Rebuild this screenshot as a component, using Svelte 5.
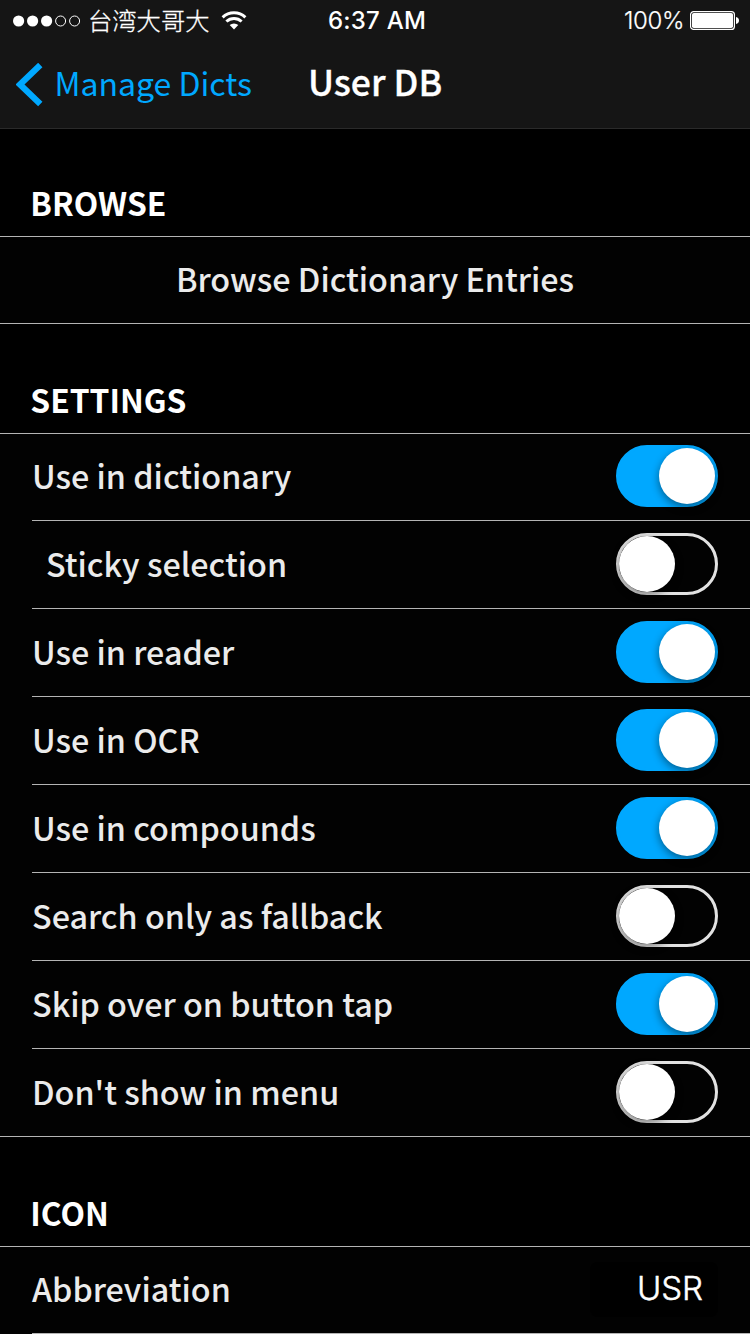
<script>
  const settings = [
    { label: 'Use in dictionary', on: true },
    { label: 'Sticky selection', on: false, nested: true },
    { label: 'Use in reader', on: true },
    { label: 'Use in OCR', on: true },
    { label: 'Use in compounds', on: true },
    { label: 'Search only as fallback', on: false },
    { label: 'Skip over on button tap', on: true },
    { label: "Don't show in menu", on: false }
  ];
</script>

<main class="screen">
  <header>
    <div class="status">
      <div class="carrier">
        <svg class="signal" width="68" height="12" viewBox="0 0 68 12">
          <circle cx="5.6" cy="6" r="5.6" fill="#fff" />
          <circle cx="19.6" cy="6" r="5.6" fill="#fff" />
          <circle cx="33.6" cy="6" r="5.6" fill="#fff" />
          <circle cx="47.6" cy="6" r="5" fill="none" stroke="#fff" />
          <circle cx="61.6" cy="6" r="5" fill="none" stroke="#fff" />
        </svg>
        <span class="operator">台湾大哥大</span>
        <svg class="wifi" width="26" height="19" viewBox="0 0 26 19">
          <g fill="none" stroke="#fff" stroke-width="3">
            <path d="M1.6 6.3A16.6 16.6 0 0 1 24.4 6.3" />
            <path d="M5.4 10.5A11 11 0 0 1 20.6 10.5" />
          </g>
          <path d="M8.7 14A6.6 6.6 0 0 1 17.3 14L13 18.5Z" fill="#fff" />
        </svg>
      </div>
      <span class="time">6:37 AM</span>
      <div class="power">
        <span class="percent">100%</span>
        <svg width="50" height="20" viewBox="0 0 50 20">
          <rect x=".6" y=".6" width="43.8" height="17.8" rx="3" fill="none" stroke="#fff" stroke-width="1.2" />
          <rect x="2" y="2" width="41" height="15" rx="1.8" fill="#fff" />
          <path d="M46 6Q49 6.6 49 9.5T46 13Z" fill="#fff" />
        </svg>
      </div>
    </div>
    <nav>
      <a class="back" href="#manage">
        <svg width="28" height="44" viewBox="0 0 28 44">
          <path d="M24.3 2L4 21.5L24.3 41" fill="none" stroke="#00a8ff" stroke-width="6.2" />
        </svg>
        <span>Manage Dicts</span>
      </a>
      <h1>User DB</h1>
    </nav>
  </header>

  <h2 class="first">BROWSE</h2>
  <section>
    <div class="row action"><span class="label">Browse Dictionary Entries</span></div>
  </section>

  <h2>SETTINGS</h2>
  <section>
    {#each settings as item}
      <div class="row">
        <span class="label" class:nested={item.nested}>{item.label}</span>
        <span class="switch" class:on={item.on}><i></i></span>
      </div>
    {/each}
  </section>

  <h2>ICON</h2>
  <section class="more">
    <div class="row">
      <span class="label">Abbreviation</span>
      <span class="field">USR</span>
    </div>
  </section>
</main>

<style>
  :global(body) {
    margin: 0;
    background: #000;
    overflow: hidden;
  }
  .screen {
    width: 750px;
    height: 1334px;
    overflow: hidden;
    background: #000;
    color: #fff;
    font-family: 'Noto Sans CJK SC', sans-serif;
  }
  header {
    box-sizing: border-box;
    height: 129px;
    background: #151515;
    border-bottom: 1px solid #2a2a2a;
  }
  .status {
    display: grid;
    grid-template-columns: 1fr auto 1fr;
    align-items: center;
    height: 41px;
    padding: 0 10px 0 13px;
    font: 24px/40px Inter, sans-serif;
  }
  .carrier,
  .power {
    display: flex;
    align-items: center;
  }
  .operator {
    margin-left: 7px;
    margin-top: -2px;
    font: 300 24.3px/40px 'Noto Sans CJK SC', sans-serif;
    -webkit-text-stroke: 0.3px #fff;
  }
  .wifi {
    margin: -1px 0 0 12px;
  }
  .time {
    padding-left: 1px;
    font-weight: 500;
    letter-spacing: 0.25px;
  }
  .power {
    justify-content: flex-end;
    gap: 6px;
  }
  .percent {
    letter-spacing: -0.4px;
    font-weight: 350;
    -webkit-text-stroke: 0.2px #fff;
  }
  nav {
    display: grid;
    grid-template-columns: 1fr auto 1fr;
    height: 87px;
  }
  .back {
    display: flex;
    align-items: center;
    gap: 10.5px;
    padding-left: 16px;
    color: #00a8ff;
    text-decoration: none;
    font-size: 32px;
    white-space: nowrap;
  }
  .back span {
    margin-top: -5px;
  }
  h1 {
    margin: 0;
    font-size: 35.6px;
    line-height: 79px;
    font-weight: 500;
    -webkit-text-stroke: 0.3px #fff;
  }
  h2 {
    display: flex;
    align-items: flex-end;
    box-sizing: border-box;
    height: 109px;
    margin: 0;
    padding: 0 30.3px 9px;
    font-size: 31.8px;
    line-height: 50px;
    font-weight: 700;
  }
  h2.first {
    height: 107px;
  }
  section {
    border-top: 1px solid #b4b4b4;
    background: #020202;
  }
  .row {
    display: flex;
    align-items: center;
    justify-content: space-between;
    box-sizing: border-box;
    height: 88px;
    margin-left: 32px;
    padding: 0 32px 1px 0;
    border-bottom: 1px solid #b4b4b4;
    font-size: 32.3px;
    line-height: 50px;
    font-weight: 500;
    color: #ebebeb;
  }
  .label {
    margin-top: -2px;
  }
  .row:first-child {
    height: 87px;
    padding-bottom: 2px;
  }
  .row:last-child {
    margin-left: 0;
    padding-left: 32px;
  }
  .more .row:last-child {
    margin-left: 32px;
    padding-left: 0;
  }
  .action {
    justify-content: center;
  }
  .nested {
    padding-left: 14px;
  }
  .switch {
    box-sizing: border-box;
    display: flex;
    width: 102px;
    height: 62px;
    border: 3px solid #e2e2e2;
    border-radius: 31px;
  }
  .switch i {
    width: 56px;
    height: 56px;
    border-radius: 50%;
    background: #fff;
    box-shadow: 0 3px 8px rgba(0, 0, 0, 0.45);
  }
  .on {
    justify-content: flex-end;
    border-color: #00a8ff;
    background: #00a8ff;
  }
  .field {
    box-sizing: border-box;
    width: 128px;
    height: 55px;
    padding-right: 15px;
    border-radius: 8px;
    background: #000;
    color: #fff;
    text-align: right;
    font: 300 33px/52px Inter, sans-serif;
    -webkit-text-stroke: 0.5px #fff;
  }
</style>
